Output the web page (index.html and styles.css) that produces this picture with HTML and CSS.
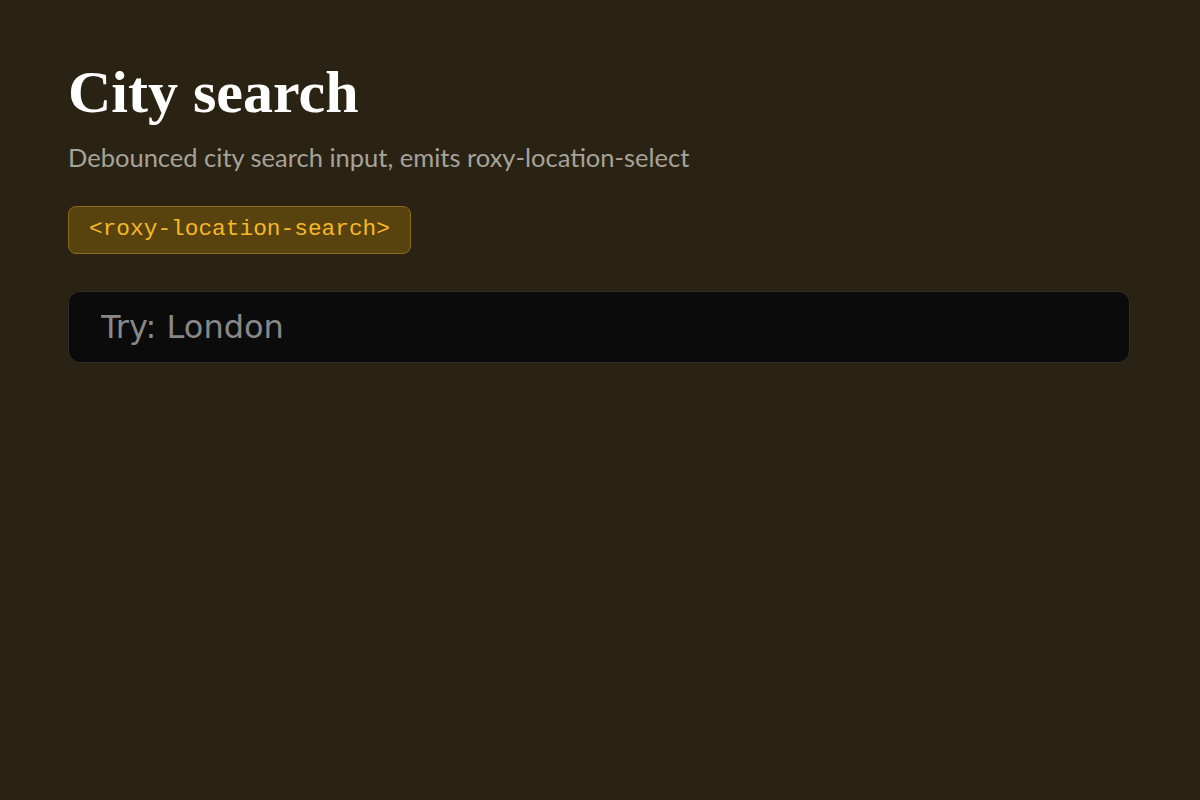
FILE: index.html
```html
<!DOCTYPE html>
<html lang="en">
<head>
<meta charset="utf-8">
<title>City search</title>
<link rel="stylesheet" href="styles.css">
</head>
<body>
<main class="page">
  <h1 class="title">City search</h1>
  <p class="subtitle">Debounced city search input, emits roxy-location-select</p>
  <div class="tag-row"><code class="tag">&lt;roxy-location-search&gt;</code></div>
  <input class="search" type="text" placeholder="Try: London">
</main>
</body>
</html>
```
FILE: styles.css
```css
* { box-sizing: border-box; }
html, body { margin: 0; padding: 0; }
body {
  background: #2a2212;
  width: 1200px;
  height: 800px;
  overflow: hidden;
}
.page {
  padding: 60px 69px 0 68px;
  display: flex;
  flex-direction: column;
}
.title {
  margin: 0;
  font-family: "Liberation Serif", "DejaVu Serif", serif;
  font-weight: 700;
  font-size: 60px;
  line-height: 64px;
  color: #ffffff;
}
.subtitle {
  margin: 17px 0 0;
  font-family: "Lato", "Noto Sans", sans-serif;
  font-size: 25.5px;
  line-height: 32px;
  color: #a6a39b;
}
.tag-row {
  margin-top: 33px;
  display: flex;
}
.tag {
  display: inline-block;
  padding: 9px 20px 11px;
  border: 1px solid #8c6a1c;
  border-radius: 8px;
  background: #58430f;
  color: #f6b925;
  font-family: "Liberation Mono", monospace;
  font-size: 22.8px;
  line-height: 26px;
}
.search {
  margin-top: 37px;
  width: 1062px;
  height: 72px;
  padding: 0 32px;
  background: #0b0b0b;
  border: 1px solid #302e2a;
  border-radius: 12px;
  font-family: "DejaVu Sans", sans-serif;
  font-size: 32px;
  color: #e0e0e0;
  outline: none;
}
.search::placeholder { color: #888888; }
```
